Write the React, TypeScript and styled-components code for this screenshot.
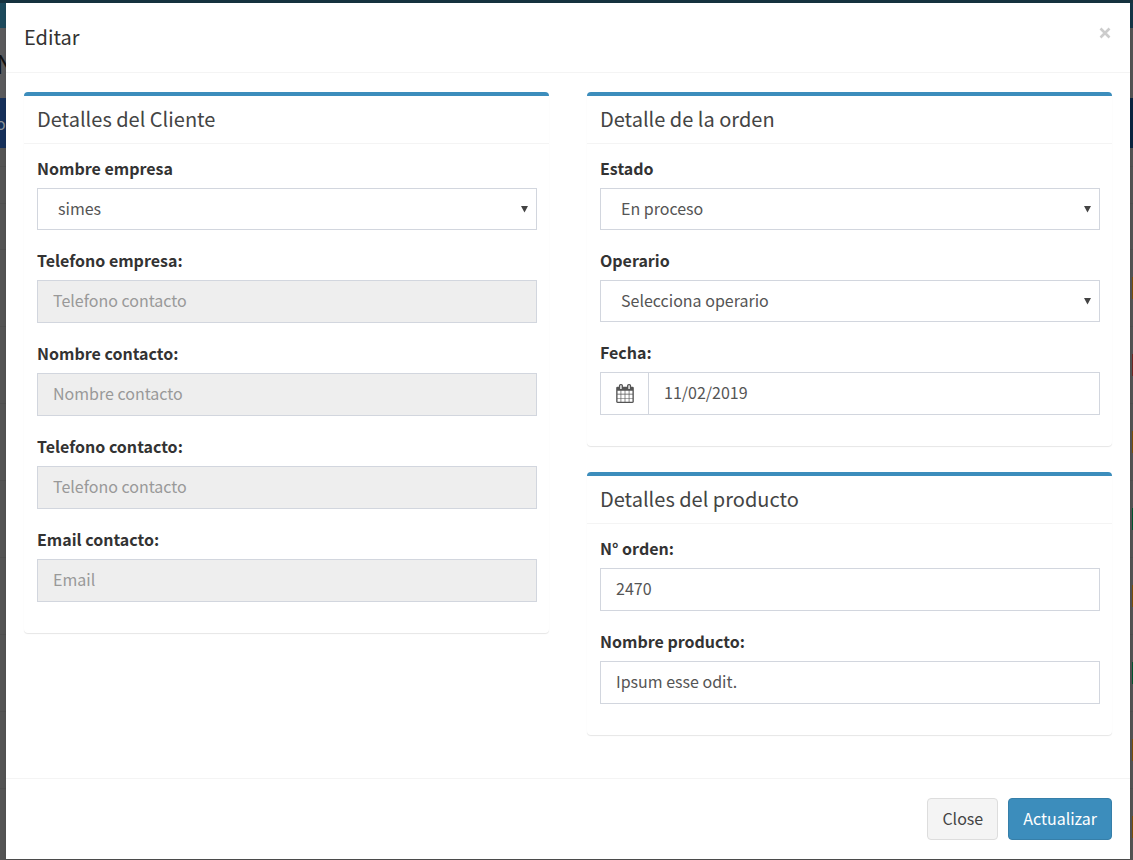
import React, { useId, useState } from "react";
import styled, { createGlobalStyle } from "styled-components";

const GlobalStyle = createGlobalStyle`
  * { box-sizing: border-box; }
  html, body { margin: 0; }
  body, button, input, select {
    font-family: "Source Sans Pro", "Noto Sans CJK JP", "Noto Sans", sans-serif;
    font-size: 16px;
    line-height: 24px;
  }
  body { background: #545454; color: #333; overflow-x: hidden; }
`;

const Page = styled.div`
  position: relative;
  min-height: 100vh;
  overflow: hidden;
  padding: 3px 3px 1px 6px;
`;

const Behind = styled.div`
  position: absolute;
  inset: 0;
  overflow: hidden;
`;

const Band = styled.div<{ $height: number; $from: string; $to: string }>`
  height: ${(p) => p.$height}px;
  background: linear-gradient(to right, ${(p) => p.$from}, ${(p) => p.$to});
  color: #8a8f94;
  line-height: ${(p) => p.$height}px;
  text-indent: -4px;
  overflow: hidden;
`;

const BehindTitle = styled(Band)`
  color: #111;
  font-size: 26px;
`;

const BehindRow = styled.div<{ $height?: number }>`
  display: flex;
  justify-content: flex-end;
  align-items: center;
  height: ${(p) => p.$height ?? 77}px;
  border-bottom: 1px solid #4f4f4f;
`;

const Status = styled.span<{ $color: string }>`
  width: 1px;
  height: 22px;
  background: ${(p) => p.$color};
`;

const Dialog = styled.form`
  position: relative;
  background: #fff;
  box-shadow: 0 2px 3px rgba(0, 0, 0, 0.125);
`;

const Header = styled.header`
  display: flex;
  justify-content: space-between;
  align-items: flex-start;
  padding: 18px 18px 20px;
  border-bottom: 1px solid #f4f4f4;
`;

const Title = styled.h1`
  margin: 0;
  font-size: 20px;
  font-weight: 400;
  line-height: 31px;
`;

const CloseIcon = styled.button`
  display: flex;
  padding: 5px 0;
  border: 0;
  background: none;
  color: #ccc;
  cursor: pointer;
`;

const Columns = styled.div`
  display: grid;
  grid-template-columns: 1fr 1fr;
  gap: 38px;
  padding: 19px 18px 17px;
`;

const Box = styled.section`
  margin-bottom: 26px;
  border-top: 4px solid #3c8dbc;
  border-radius: 4px;
  background: #fff;
  box-shadow: 0 1px 1px rgba(0, 0, 0, 0.1);
`;

const BoxTitle = styled.h2`
  margin: 0;
  padding: 9px 13px 11px;
  border-bottom: 1px solid #f4f4f4;
  color: #444;
  font-size: 20px;
  font-weight: 400;
  line-height: 27px;
`;

const BoxBody = styled.div`
  padding: 13px 12px 12px 13px;
`;

const Group = styled.div`
  margin-bottom: 19px;
`;

const Label = styled.label`
  display: block;
  margin-bottom: 8px;
  font-weight: 700;
  line-height: 23px;
`;

const Input = styled.input`
  display: block;
  flex: 1;
  width: 100%;
  min-width: 0;
  height: 43px;
  padding: 0 15px 3px;
  border: 1px solid #d2d6de;
  border-radius: 0;
  background: #fff;
  color: #555;
  &::placeholder { color: #999; opacity: 1; }
  &:disabled { background: #eee; }
`;

const SelectWrap = styled.div`
  position: relative;
`;

const SelectBox = styled.select`
  display: block;
  width: 100%;
  height: 42px;
  padding: 0 20px 2px;
  border: 1px solid #d2d6de;
  border-radius: 0;
  background: #fff;
  color: #555;
  appearance: none;
`;

const Arrow = styled.svg`
  position: absolute;
  top: 17px;
  right: 8px;
  pointer-events: none;
`;

const InputGroup = styled.div`
  display: flex;
`;

const Addon = styled.span`
  display: flex;
  align-items: center;
  justify-content: center;
  width: 48px;
  border: 1px solid #d2d6de;
  border-right: 0;
  color: #555;
`;

const Footer = styled.footer`
  display: flex;
  justify-content: flex-end;
  gap: 10px;
  padding: 19px 18px;
  border-top: 1px solid #f4f4f4;
`;

const Button = styled.button<{ $primary?: boolean }>`
  height: 42px;
  padding: 0 14px 2px;
  border: 1px solid ${(p) => (p.$primary ? "#367fa9" : "#ddd")};
  border-radius: 4px;
  background: ${(p) => (p.$primary ? "#3c8dbc" : "#f4f4f4")};
  color: ${(p) => (p.$primary ? "#fff" : "#444")};
  cursor: pointer;
`;

function SelectField({ label, options }: { label: string; options: string[] }) {
  const id = useId();
  return (
    <Group>
      <Label htmlFor={id}>{label}</Label>
      <SelectWrap>
        <SelectBox id={id}>
          {options.map((o) => (
            <option key={o}>{o}</option>
          ))}
        </SelectBox>
        <Arrow width="9" height="8" viewBox="0 0 9 8" aria-hidden="true">
          <path d="M1 1h7L4.5 7.5z" fill="#444" />
        </Arrow>
      </SelectWrap>
    </Group>
  );
}

function TextField(props: { label: string; value?: string; placeholder?: string; disabled?: boolean; icon?: React.ReactNode }) {
  const id = useId();
  const [value, setValue] = useState(props.value ?? "");
  return (
    <Group>
      <Label htmlFor={id}>{props.label}</Label>
      <InputGroup>
        {props.icon && <Addon>{props.icon}</Addon>}
        <Input
          id={id}
          type="text"
          value={value}
          placeholder={props.placeholder}
          disabled={props.disabled}
          onChange={(e) => setValue(e.target.value)}
        />
      </InputGroup>
    </Group>
  );
}

const CalendarIcon = () => (
  <svg width="18" height="19" viewBox="0 0 1664 1792" aria-hidden="true">
    <path
      fill="currentColor"
      d="M128 1664h288v-288h-288v288zM480 1664h320v-288h-320v288zM128 1312h288v-320h-288v320zM480 1312h320v-320h-320v320zM128 928h288v-288h-288v288zM864 1664h320v-288h-320v288zM480 928h320v-288h-320v288zM1248 1664h288v-288h-288v288zM864 1312h320v-320h-320v320zM512 448v-288q0-13-9.500-22.500t-22.500-9.500h-64q-13 0-22.500 9.500t-9.500 22.500v288q0 13 9.500 22.500t22.500 9.500h64q13 0 22.500-9.500t9.500-22.500zM1248 1312h288v-320h-288v320zM864 928h320v-288h-320v288zM1248 928h288v-288h-288v288zM1280 448v-288q0-13-9.500-22.500t-22.500-9.500h-64q-13 0-22.500 9.500t-9.500 22.500v288q0 13 9.500 22.500t22.500 9.500h64q13 0 22.500-9.500t9.500-22.500zM1664 384v1280q0 52-38 90t-90 38h-1408q-52 0-90-38t-38-90v-1280q0-52 38-90t90-38h128v-96q0-66 47-113t113-47h64q66 0 113 47t47 113v96h384v-96q0-66 47-113t113-47h64q66 0 113 47t47 113v96h128q52 0 90 38t38 90z"
    />
  </svg>
);

const statuses = ["#7a4e09", "#6f2620", "#7a4e09", "#00532f", "#7a4e09", "#00532f", "#7a4e09", "#7a4e09"];

export default function App() {
  return (
    <Page>
      <GlobalStyle />
      <Behind aria-hidden="true">
        <Band $height={3} $from="#16323f" $to="#16323f" />
        <Band $height={25} $from="#1d4a5c" $to="#153647" />
        <BehindTitle $height={70} $from="#5a5a5c" $to="#545454">
          N
        </BehindTitle>
        <Band $height={50} $from="#16305a" $to="#0a2540">
          o
        </Band>
        <BehindRow $height={19} />
        <BehindRow $height={37} />
        <BehindRow $height={46} />
        {statuses.map((color, i) => (
          <BehindRow key={i}>
            <Status $color={color} />
          </BehindRow>
        ))}
      </Behind>
      <Dialog role="dialog" aria-labelledby="dialog-title" onSubmit={(e) => e.preventDefault()}>
        <Header>
          <Title id="dialog-title">Editar</Title>
          <CloseIcon type="button" aria-label="Cerrar">
            <svg width="14" height="14" viewBox="0 0 14 14" aria-hidden="true">
              <path d="M2.500 2.500l9 9M11.500 2.500l-9 9" stroke="currentColor" strokeWidth="2.600" />
            </svg>
          </CloseIcon>
        </Header>
        <Columns>
          <div>
            <Box>
              <BoxTitle>Detalles del Cliente</BoxTitle>
              <BoxBody>
                <SelectField label="Nombre empresa" options={["simes"]} />
                <TextField label="Telefono empresa:" placeholder="Telefono contacto" disabled />
                <TextField label="Nombre contacto:" placeholder="Nombre contacto" disabled />
                <TextField label="Telefono contacto:" placeholder="Telefono contacto" disabled />
                <TextField label="Email contacto:" placeholder="Email" disabled />
              </BoxBody>
            </Box>
          </div>
          <div>
            <Box>
              <BoxTitle>Detalle de la orden</BoxTitle>
              <BoxBody>
                <SelectField label="Estado" options={["En proceso"]} />
                <SelectField label="Operario" options={["Selecciona operario"]} />
                <TextField label="Fecha:" value="11/02/2019" icon={<CalendarIcon />} />
              </BoxBody>
            </Box>
            <Box>
              <BoxTitle>Detalles del producto</BoxTitle>
              <BoxBody>
                <TextField label="N° orden:" value="2470" />
                <TextField label="Nombre producto:" value="Ipsum esse odit." />
              </BoxBody>
            </Box>
          </div>
        </Columns>
        <Footer>
          <Button type="button">Close</Button>
          <Button type="submit" $primary>
            Actualizar
          </Button>
        </Footer>
      </Dialog>
    </Page>
  );
}
